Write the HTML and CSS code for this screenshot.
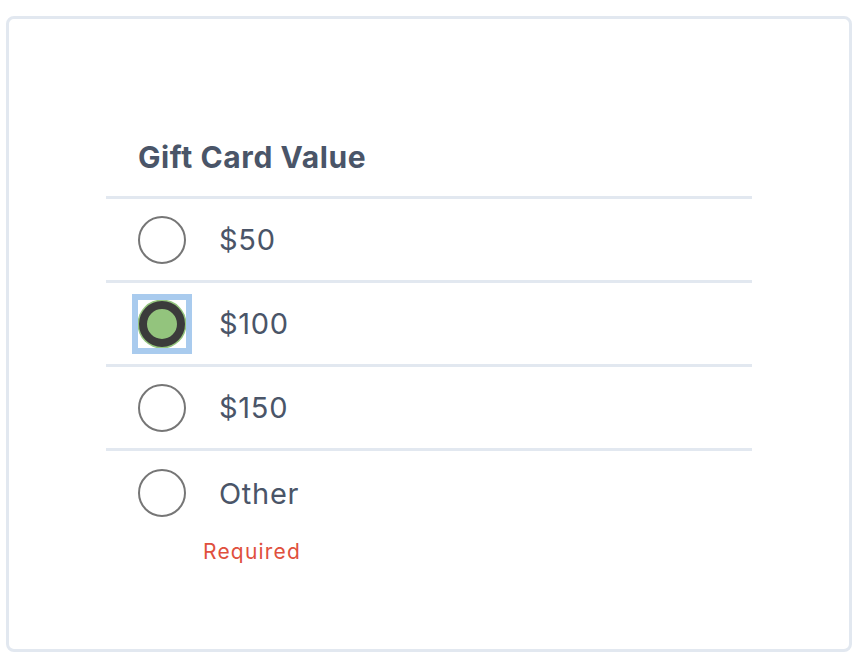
FILE: index.html
```html
<!DOCTYPE html>
<html>
<head>
<meta charset="utf-8">
<link rel="stylesheet" href="styles.css">
</head>
<body>
<div class="card">
  <div class="group">
    <h2 class="legend">Gift Card Value</h2>
    <div class="option">
      <span class="radio"></span>
      <span class="label">$50</span>
    </div>
    <div class="option">
      <span class="focus"><span class="radio checked"></span></span>
      <span class="label">$100</span>
    </div>
    <div class="option">
      <span class="radio"></span>
      <span class="label">$150</span>
    </div>
    <div class="option last">
      <span class="radio"></span>
      <span class="label">Other</span>
    </div>
    <div class="error">Required</div>
  </div>
</div>
</body>
</html>
```
FILE: styles.css
```css
html, body {
  margin: 0;
  padding: 0;
  background: #ffffff;
}
body {
  padding: 16px 4px 6px 6px;
  font-family: Inter, "Noto Sans", sans-serif;
}
.card {
  box-sizing: border-box;
  width: 846px;
  height: 636px;
  border: 3px solid #e2e8f0;
  border-radius: 8px;
  padding: 0 0 0 97px;
}
.group {
  width: 646px;
  padding-top: 120px;
}
.legend {
  margin: 0;
  padding: 0 0 0 32px;
  height: 57px;
  font-size: 30px;
  line-height: 36px;
  font-weight: 700;
  letter-spacing: 0.6px;
  color: #4a5568;
}
.option {
  display: flex;
  align-items: center;
  height: 81px;
  border-top: 3px solid #e2e8f0;
  padding-left: 32px;
}
.option.last {
  height: 84px;
}
.radio {
  box-sizing: border-box;
  display: block;
  width: 48px;
  height: 48px;
  border: 2px solid #767676;
  border-radius: 50%;
  flex: none;
}
.focus {
  display: block;
  width: 48px;
  height: 48px;
  outline: 6px solid #a9cbee;
  flex: none;
}
.radio.checked {
  width: 46px;
  height: 46px;
  margin: 1px;
  border: 8px solid #3b3b3b;
  background: #93c47d;
  box-shadow: 0 0 0 1.5px #93c47d;
}
.label {
  margin-left: 33px;
  font-size: 29px;
  letter-spacing: 0.7px;
  color: #4a5568;
}
.error {
  margin-top: 4px;
  padding-left: 97px;
  font-size: 21px;
  letter-spacing: 1.2px;
  color: #e0503d;
}
```
